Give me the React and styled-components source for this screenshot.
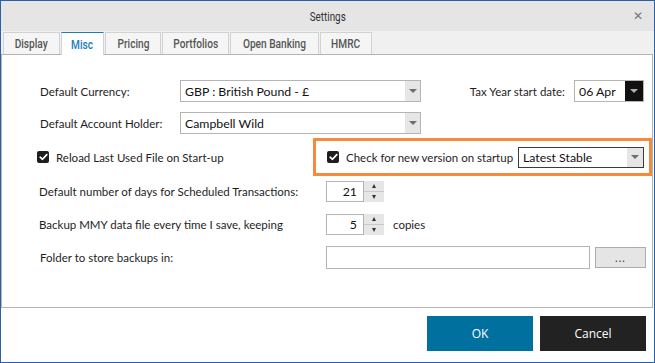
import React from "react";
import styled, { createGlobalStyle } from "styled-components";

const Global = createGlobalStyle`
  html, body { margin: 0; padding: 0; background: #ffffff; }
  * { box-sizing: border-box; }
`;

const Window = styled.div`
  width: 655px;
  height: 363px;
  border: 1px solid #2b5fa8;
  display: flex;
  flex-direction: column;
  background: #ffffff;
  font-family: "Lato", "Open Sans", sans-serif;
  font-size: 11.5px;
  color: #1e1e1e;
`;

const TitleBar = styled.div`
  height: 30px;
  flex: none;
  background: #e5e5e5;
  display: flex;
  align-items: center;
  justify-content: center;
  position: relative;
`;

const Condensed = styled.span`
  display: inline-block;
  font-family: "Roboto", sans-serif;
  font-size: ${(p) => p.$size || 12.5}px;
  font-weight: ${(p) => p.$weight || 400};
  transform: scaleX(${(p) => p.$scale || 0.8});
  white-space: nowrap;
`;

const Title = styled(Condensed)`
  color: #333333;
`;

const Close = styled.span`
  position: absolute;
  right: 11px;
  top: 8px;
  font-family: "DejaVu Sans", sans-serif;
  font-size: 12px;
  font-weight: bold;
  color: #777777;
`;

const TabStrip = styled.div`
  height: 23px;
  flex: none;
  background: #f0f0f0;
  display: flex;
  align-items: flex-end;
  padding-left: 2px;
`;

const Tab = styled.div`
  width: ${(p) => p.$w}px;
  display: flex;
  align-items: center;
  justify-content: center;
  color: ${(p) => (p.$active ? "#1a7db8" : "#555555")};
  background: ${(p) => (p.$active ? "#ffffff" : "#f5f5f5")};
  border: 1px solid #d2d2d2;
  border-top: 1px solid ${(p) => (p.$active ? "#1a7db8" : "#d2d2d2")};
  border-bottom: none;
  margin-right: 1px;
  margin-bottom: ${(p) => (p.$active ? "-1px" : "0")};
  height: ${(p) => (p.$active ? 23 : 22)}px;
  position: relative;
  z-index: 1;
`;

const Panel = styled.div`
  height: 254px;
  flex: none;
  margin-right: 1px;
  border: 1px solid #b4b4b4;
  padding: 25px 0 0 35px;
  display: flex;
  flex-direction: column;
`;

const Row = styled.div`
  display: flex;
  align-items: center;
  height: ${(p) => p.$h || 22}px;
  margin-top: ${(p) => p.$mt || 0}px;
`;

const Label = styled.div`
  width: ${(p) => (p.$w ? p.$w + "px" : "auto")};
  flex: none;
  white-space: nowrap;
  padding-left: ${(p) => p.$pl || 3}px;
`;

const Select = styled.div`
  width: ${(p) => p.$w}px;
  height: ${(p) => p.$h || 22}px;
  border: 1px solid ${(p) => (p.$dark ? "#3c3c3c" : "#b4b4b4")};
  background: #ffffff;
  display: flex;
  align-items: stretch;
  flex: none;
`;

const SelectText = styled.div`
  flex: 1;
  display: flex;
  align-items: center;
  padding-left: 4px;
  font-size: 12.3px;
  color: #111111;
  white-space: nowrap;
`;

const Arrow = styled.div`
  width: ${(p) => p.$w || 15}px;
  background: ${(p) => (p.$black ? "#111111" : "#e6e6e6")};
  display: flex;
  align-items: center;
  justify-content: center;
  &::after {
    content: "";
    border-left: 4px solid transparent;
    border-right: 4px solid transparent;
    border-top: 4px solid ${(p) => (p.$black ? "#b0b0b0" : "#6e6e6e")};
  }
`;

const Spacer = styled.div`
  flex: ${(p) => (p.$w ? "none" : 1)};
  width: ${(p) => (p.$w ? p.$w + "px" : "auto")};
`;

const TaxLabel = styled.div`
  margin-right: 9px;
  white-space: nowrap;
`;

const CheckRow = styled.div`
  display: flex;
  align-items: center;
  width: ${(p) => (p.$w ? p.$w + "px" : "auto")};
  flex: none;
  gap: 7px;
  white-space: nowrap;
`;

const Box = styled.span`
  width: 12px;
  height: 12px;
  border-radius: 2px;
  background: #1e1e1e;
  display: inline-flex;
  align-items: center;
  justify-content: center;
  flex: none;
`;

const Highlight = styled.div`
  width: 339px;
  height: 38px;
  border: 3px solid #f7893b;
  display: flex;
  align-items: center;
  padding: 0 5px 0 11px;
  flex: none;
`;

const Spin = styled.div`
  display: flex;
  height: 21px;
  flex: none;
`;

const SpinInput = styled.div`
  width: 38px;
  border: 1px solid #b4b4b4;
  display: flex;
  align-items: center;
  justify-content: flex-end;
  padding-right: 6px;
  font-size: 12.3px;
  color: #111111;
`;

const SpinButtons = styled.div`
  width: 20px;
  background: #e6e6e6;
  display: flex;
  flex-direction: column;
`;

const SpinHalf = styled.div`
  flex: 1;
  display: flex;
  align-items: center;
  justify-content: center;
  border-top: ${(p) => (p.$down ? "1px solid #c8c8c8" : "none")};
  &::after {
    content: "";
    border-left: 2.5px solid transparent;
    border-right: 2.5px solid transparent;
    ${(p) => (p.$down ? "border-top: 4px solid #333;" : "border-bottom: 4px solid #333;")}
  }
`;

const Copies = styled.span`
  margin-left: 9px;
`;

const TextInput = styled.div`
  width: 264px;
  height: 23px;
  border: 1px solid #b4b4b4;
  flex: none;
`;

const DotsButton = styled.div`
  width: 51px;
  height: 21px;
  margin-left: 5px;
  border: 1px solid #adadad;
  background: #e5e5e5;
  display: flex;
  align-items: center;
  justify-content: center;
  font-size: 11px;
  letter-spacing: 1px;
  color: #333333;
  flex: none;
`;

const Footer = styled.div`
  flex: 1;
  display: flex;
  justify-content: flex-end;
  align-items: flex-start;
  padding: 8px 8px 0 0;
  gap: 7px;
`;

const Button = styled.div`
  width: 106px;
  height: 35px;
  display: flex;
  align-items: center;
  justify-content: center;
  color: #ffffff;
  font-family: "Open Sans", sans-serif;
  font-size: 12px;
  background: ${(p) => (p.$primary ? "#00719e" : "#222222")};
`;

const Check = () => (
  <Box>
    <svg width="9" height="8" viewBox="0 0 9 8">
      <path d="M1.2 4.2 L3.5 6.3 L7.8 1.6" fill="none" stroke="#ffffff" strokeWidth="1.7" strokeLinecap="round" strokeLinejoin="round" />
    </svg>
  </Box>
);

const tabs = [
  ["Display", 57],
  ["Misc", 43],
  ["Pricing", 56],
  ["Portfolios", 67],
  ["Open Banking", 89],
  ["HMRC", 52],
];

const SpinBox = ({ value }) => (
  <Spin>
    <SpinInput>{value}</SpinInput>
    <SpinButtons>
      <SpinHalf />
      <SpinHalf $down />
    </SpinButtons>
  </Spin>
);

export default function App() {
  return (
    <>
      <Global />
      <Window>
        <TitleBar>
          <Title $size={13} $scale={0.76}>Settings</Title>
          <Close>✕</Close>
        </TitleBar>
        <TabStrip>
          {tabs.map(([t, w]) => (
            <Tab key={t} $w={w} $active={t === "Misc"}>
              <Condensed $size={13} $weight={500} $scale={0.78}>{t}</Condensed>
            </Tab>
          ))}
        </TabStrip>
        <Panel>
          <Row $h={22}>
            <Label $w={143}>Default Currency:</Label>
            <Select $w={241}>
              <SelectText>GBP : British Pound - £</SelectText>
              <Arrow />
            </Select>
            <Spacer />
            <TaxLabel>Tax Year start date:</TaxLabel>
            <Select $w={70} $h={22}>
              <SelectText>06 Apr</SelectText>
              <Arrow $black $w={18} />
            </Select>
            <Spacer $w={8} />
          </Row>
          <Row $h={22} $mt={10}>
            <Label $w={143}>Default Account Holder:</Label>
            <Select $w={241}>
              <SelectText>Campbell Wild</SelectText>
              <Arrow />
            </Select>
          </Row>
          <Row $h={38} $mt={4}>
            <CheckRow $w={276}>
              <Check />
              Reload Last Used File on Start-up
            </CheckRow>
            <Highlight>
              <CheckRow>
                <Check />
                Check for new version on startup
              </CheckRow>
              <Spacer />
              <Select $w={126} $h={21} $dark>
                <SelectText>Latest Stable</SelectText>
                <Arrow $w={16} />
              </Select>
            </Highlight>
          </Row>
          <Row $h={21} $mt={5}>
            <Label $w={289} $pl={2}>Default number of days for Scheduled Transactions:</Label>
            <SpinBox value="21" />
          </Row>
          <Row $h={21} $mt={12}>
            <Label $w={289} $pl={2}>Backup MMY data file every time I save, keeping</Label>
            <SpinBox value="5" />
            <Copies>copies</Copies>
          </Row>
          <Row $h={23} $mt={11}>
            <Label $w={289} $pl={3}>Folder to store backups in:</Label>
            <TextInput />
            <DotsButton>...</DotsButton>
          </Row>
        </Panel>
        <Footer>
          <Button $primary>OK</Button>
          <Button>Cancel</Button>
        </Footer>
      </Window>
    </>
  );
}
